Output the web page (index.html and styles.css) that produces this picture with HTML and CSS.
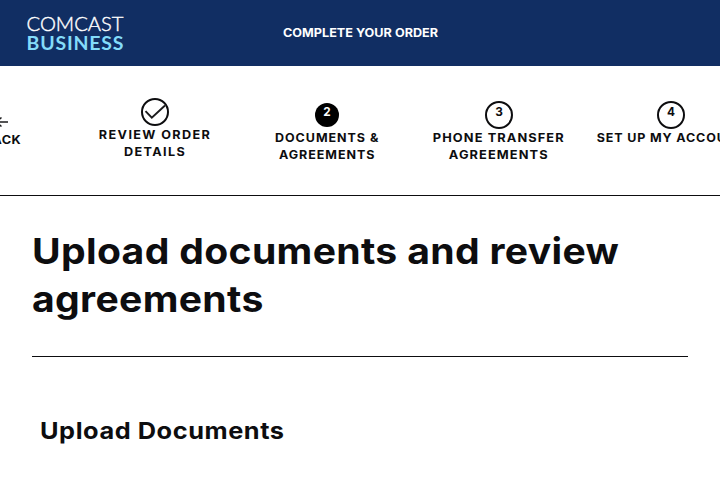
FILE: index.html
```html
<!DOCTYPE html>
<html lang="en">
<head>
<meta charset="utf-8">
<title>Complete your order</title>
<link rel="stylesheet" href="styles.css">
</head>
<body>
<header class="header">
  <svg class="logo" width="100" height="40" viewBox="0 0 100 40" role="img" aria-label="Comcast Business">
    <text class="logo-top" x="0.5" y="16.5" textLength="97" lengthAdjust="spacingAndGlyphs">COMCAST</text>
    <text class="logo-bottom" x="0.5" y="35.7" textLength="97" lengthAdjust="spacing">BUSINESS</text>
  </svg>
  <div class="header-title">COMPLETE YOUR ORDER</div>
</header>
<nav class="steps">
  <a class="back">
    <svg width="16" height="12" viewBox="0 0 16 12"><path d="M15 6H2M8.5 1.5L3 6l5.500 4.500"/></svg>
    <span>BACK</span>
  </a>
  <div class="step done">
    <svg width="28" height="28" viewBox="0 0 28 28"><circle cx="14" cy="14" r="13"/><path d="M4.500 13.200l6.300 6.500L24 7.500"/></svg>
    <span class="label review">REVIEW ORDER<br>DETAILS</span>
  </div>
  <div class="step">
    <span class="num current">2</span>
    <span class="label docs">DOCUMENTS &amp;<br>AGREEMENTS</span>
  </div>
  <div class="step">
    <span class="num">3</span>
    <span class="label phone">PHONE TRANSFER<br>AGREEMENTS</span>
  </div>
  <div class="step">
    <span class="num">4</span>
    <span class="label account">SET UP MY ACCOUNT</span>
  </div>
</nav>
<main class="main">
  <h1>Upload documents and review<br>agreements</h1>
  <hr>
  <h2>Upload Documents</h2>
</main>
</body>
</html>
```
FILE: styles.css
```css
* { box-sizing: border-box; }
body {
  margin: 0;
  height: 480px;
  overflow: hidden;
  background: #fff;
  color: #0d0d0f;
  font-family: Inter, "Liberation Sans", sans-serif;
}
.header {
  display: grid;
  grid-template-columns: 100px 1fr 100px;
  align-items: center;
  height: 66px;
  padding: 0 26px;
  background: #112e63;
}
.logo { display: block; margin-top: 1px; }
.logo text { font-family: Lato, sans-serif; }
.logo-top { fill: #fff; stroke: #fff; stroke-width: .4px; font-size: 20px; font-weight: 300; }
.logo-bottom { fill: #83dcfa; font-size: 19.5px; font-weight: 700; }
.header-title {
  color: #fff;
  font-size: 11.6px;
  font-weight: 700;
  letter-spacing: 0;
  text-align: center;
  transform: translateX(.5px) scaleX(1.09);
}
.steps {
  display: flex;
  height: 130px;
  padding-top: 32px;
  border-bottom: 1px solid #0d0d0f;
  font-size: 11.8px;
  font-weight: 700;
  line-height: 17px;
}
.back {
  flex: none;
  display: flex;
  flex-direction: column;
  align-items: center;
  width: 68px;
  margin: 18px 34px 0 -33px;
}
.back svg, .done svg { fill: none; stroke: #1b1b1d; stroke-width: 1.9; }
.done svg circle { stroke: #0d0d0f; stroke-width: 2; }
.back svg { stroke-width: 1.6; }
.back span { margin-top: 4px; letter-spacing: .3px; transform: translateX(1px) scaleX(1.08); }
.step {
  flex: none;
  display: flex;
  flex-direction: column;
  align-items: center;
  width: 172px;
  padding-top: 3px;
}
.done { padding-top: 0; }
.label {
  padding-top: 1px;
  text-align: center;
  white-space: nowrap;
  letter-spacing: .9px;
  transform: scaleX(1.06);
}
.review { letter-spacing: 1.3px; transform: translateX(.5px) scaleX(1.07); }
.phone { letter-spacing: 1px; transform: scaleX(1.085); }
.account { letter-spacing: .8px; }
.num {
  width: 28px;
  height: 28px;
  border: 2px solid #0d0d0f;
  border-radius: 50%;
  text-align: center;
  line-height: 18px;
}
.current {
  width: 24px;
  height: 24px;
  margin: 2px 0;
  border: 0;
  background: #000;
  color: #fff;
}
.main { padding: 31px 32px 0; }
h1 {
  margin: 0;
  font-size: 36px;
  font-weight: 700;
  line-height: 48px;
  letter-spacing: .3px;
  white-space: nowrap;
  transform: scaleX(1.087);
  transform-origin: left;
}
hr {
  height: 1px;
  margin: 33px 0 0;
  border: 0;
  background: #0d0d0f;
}
h2 {
  margin: 58px 8px 0;
  font-size: 23px;
  font-weight: 700;
  line-height: 32px;
  letter-spacing: .5px;
  transform: scaleX(1.102);
  transform-origin: left;
}
```
